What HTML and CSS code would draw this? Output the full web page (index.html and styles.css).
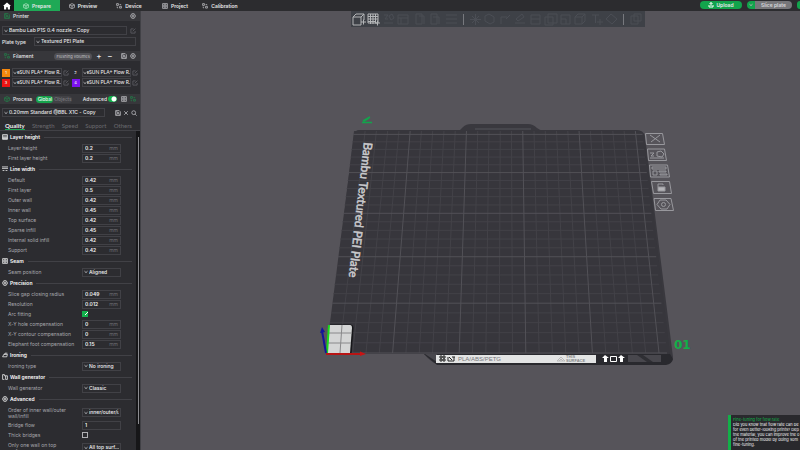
FILE: index.html
```html
<!DOCTYPE html>
<html lang="en">
<head>
<meta charset="utf-8">
<title>Slicer - Prepare</title>
<link rel="stylesheet" href="styles.css">
</head>
<body>
<svg class="defs" aria-hidden="true">
  <symbol id="chev" viewBox="0 0 4 4"><path d="M.5 1.2 2 2.6 3.5 1.2"/></symbol>
  <symbol id="gear" viewBox="0 0 10 10"><path d="M3 1.2h4L9.2 5 7 8.800H3L.8 5z"/><circle cx="5" cy="5" r="1.700"/></symbol>
  <symbol id="edit" viewBox="0 0 10 10"><path d="M6 1.500H1.500v7h7V5M4.500 5.500 9 1"/></symbol>
  <symbol id="cube" viewBox="0 0 10 10"><path d="M5 1 9 3v4.500L5 9.300 1 7.500V3zM1 3l4 2 4-2M5 5v4"/></symbol>
  <symbol id="nodes" viewBox="0 0 10 10"><path d="M1 1h3v3H1zM6 5.500h3v3H6zM6 2.500h2v1M3.500 8H2V6"/></symbol>
  <symbol id="layers" viewBox="0 0 10 10"><path d="M1 1h8v8H1zM1 3.500h8M1 6h8M1 7.500h8"/></symbol>
  <symbol id="lines" viewBox="0 0 10 10"><path d="M0 1.500h10M0 4h10M1 7.500h3M6 7.500h3"/></symbol>
  <symbol id="box" viewBox="0 0 10 10"><path d="M1 1h8v8H1zM3 3h4v4H3zM5 3v4"/></symbol>
  <symbol id="iron" viewBox="0 0 10 10"><path d="M1 8 3 4h6L8 8zM4 4l1-2h4"/></symbol>
  <symbol id="wall" viewBox="0 0 10 10"><path d="M4 1H1v8h3M6 9h3V3H6zM4 1v2h2"/></symbol>
  <symbol id="save" viewBox="0 0 10 10"><path d="M1 1h6l2 2v6H1zM3 1v3h4M3 9V6h4v3"/></symbol>
  <symbol id="close" viewBox="0 0 10 10"><path d="M2 2l6 6M8 2 2 8"/></symbol>
  <symbol id="search" viewBox="0 0 10 10"><circle cx="4.500" cy="4.500" r="3.200"/><path d="M7 7l2.500 2.500"/></symbol>
</svg>

<header class="topbar">
  <button class="home" aria-label="Home"><svg viewBox="0 0 10 10"><path d="M5 .5 0 5h1.300v4.500H4V6.500h2v3h2.700V5H10z"/></svg></button>
  <nav class="nav">
    <a class="nav-item current" href="#"><svg class="ico"><use href="#cube"/></svg>Prepare</a>
    <a class="nav-item" href="#"><svg class="ico"><use href="#cube"/></svg>Preview</a>
    <a class="nav-item" href="#"><svg class="ico"><use href="#nodes"/></svg>Device</a>
    <a class="nav-item" href="#"><svg class="ico"><use href="#box"/></svg>Project</a>
    <a class="nav-item" href="#"><svg class="ico"><use href="#nodes"/></svg>Calibration</a>
  </nav>
  <div class="actions">
    <button class="upload"><svg class="ico"><path d="M1 3v2h4V3M3 4V.5M1.500 2 3 .5 4.500 2" /></svg>Upload</button>
    <div class="split"><button class="drop" aria-label="Slice options"><svg class="chev"><use href="#chev"/></svg></button><button class="slice">Slice plate</button></div>
    <button class="cut" aria-label="Print options"></button>
  </div>
</header>

<div class="app">
<aside class="sidebar">
  <div class="panel">
    <h2 class="bar"><svg class="ico green"><use href="#save"/></svg>Printer<svg class="ico end"><use href="#gear"/></svg></h2>
    <div class="printer">
      <div class="line"><span class="pick grow"><svg class="chev"><use href="#chev"/></svg><select aria-label="Printer"><option>Bambu Lab P1S 0.4 nozzle - Copy</option></select></span><svg class="ico dim"><use href="#edit"/></svg></div>
      <div class="line plate"><label for="plate">Plate type</label><span class="pick grow"><svg class="chev"><use href="#chev"/></svg><select id="plate"><option>Textured PEI Plate</option></select></span></div>
    </div>
    <h2 class="bar"><svg class="ico green"><use href="#nodes"/></svg>Filament<button class="flush">Flushing volumes</button><button class="sign" aria-label="Add">+</button><button class="sign" aria-label="Remove">−</button><svg class="ico end"><use href="#save"/></svg><svg class="ico"><use href="#gear"/></svg></h2>
    <div class="filaments">
      <div class="filament"><button class="swatch orange">1</button><span class="pick grow"><svg class="chev"><use href="#chev"/></svg><select aria-label="Filament 1"><option>eSUN PLA+ Flow R...</option></select></span><svg class="ico dim"><use href="#edit"/></svg></div>
      <div class="filament"><button class="swatch">2</button><span class="pick grow"><svg class="chev"><use href="#chev"/></svg><select aria-label="Filament 2"><option>eSUN PLA+ Flow R...</option></select></span><svg class="ico dim"><use href="#edit"/></svg></div>
      <div class="filament"><button class="swatch red">3</button><span class="pick grow"><svg class="chev"><use href="#chev"/></svg><select aria-label="Filament 3"><option>eSUN PLA+ Flow R...</option></select></span><svg class="ico dim"><use href="#edit"/></svg></div>
      <div class="filament"><button class="swatch violet">4</button><span class="pick grow"><svg class="chev"><use href="#chev"/></svg><select aria-label="Filament 4"><option>eSUN PLA+ Flow R...</option></select></span><svg class="ico dim"><use href="#edit"/></svg></div>
    </div>
    <div class="bar process"><svg class="ico green"><use href="#cube"/></svg><h2>Process</h2><div class="scope"><button class="on">Global</button><button>Objects</button></div><label class="adv end">Advanced<input class="switch" type="checkbox" checked></label><svg class="ico"><use href="#box"/></svg><svg class="ico green"><use href="#nodes"/></svg></div>
    <div class="line preset"><span class="pick"><svg class="chev"><use href="#chev"/></svg><select aria-label="Process preset"><option>0.20mm Standard @BBL X1C - Copy</option></select></span><svg class="ico end"><use href="#save"/></svg><svg class="ico"><use href="#close"/></svg><svg class="ico"><use href="#search"/></svg></div>
    <nav class="tabs"><a class="tab current" href="#">Quality</a><a class="tab" href="#">Strength</a><a class="tab" href="#">Speed</a><a class="tab" href="#">Support</a><a class="tab" href="#">Others</a></nav>
  </div>

  <div class="scroller">
  <form class="settings">
    <h3><svg class="ico"><use href="#layers"/></svg>Layer height</h3>
    <div class="row"><label for="a1">Layer height</label><span class="field"><input id="a1" value="0.2">mm</span></div>
    <div class="row"><label for="a2">First layer height</label><span class="field"><input id="a2" value="0.2">mm</span></div>
    <h3><svg class="ico"><use href="#lines"/></svg>Line width</h3>
    <div class="row"><label for="b1">Default</label><span class="field"><input id="b1" value="0.42">mm</span></div>
    <div class="row"><label for="b2">First layer</label><span class="field"><input id="b2" value="0.5">mm</span></div>
    <div class="row"><label for="b3">Outer wall</label><span class="field"><input id="b3" value="0.42">mm</span></div>
    <div class="row"><label for="b4">Inner wall</label><span class="field"><input id="b4" value="0.45">mm</span></div>
    <div class="row"><label for="b5">Top surface</label><span class="field"><input id="b5" value="0.42">mm</span></div>
    <div class="row"><label for="b6">Sparse infill</label><span class="field"><input id="b6" value="0.45">mm</span></div>
    <div class="row"><label for="b7">Internal solid infill</label><span class="field"><input id="b7" value="0.42">mm</span></div>
    <div class="row"><label for="b8">Support</label><span class="field"><input id="b8" value="0.42">mm</span></div>
    <h3><svg class="ico"><use href="#box"/></svg>Seam</h3>
    <div class="row"><label for="c1">Seam position</label><span class="pick"><svg class="chev"><use href="#chev"/></svg><select id="c1"><option>Aligned</option></select></span></div>
    <h3><svg class="ico"><use href="#gear"/></svg>Precision</h3>
    <div class="row"><label for="d1">Slice gap closing radius</label><span class="field"><input id="d1" value="0.049">mm</span></div>
    <div class="row"><label for="d2">Resolution</label><span class="field"><input id="d2" value="0.012">mm</span></div>
    <div class="row"><label for="d3">Arc fitting</label><input class="tick" id="d3" type="checkbox" checked></div>
    <div class="row"><label for="d4">X-Y hole compensation</label><span class="field"><input id="d4" value="0">mm</span></div>
    <div class="row"><label for="d5">X-Y contour compensation</label><span class="field"><input id="d5" value="0">mm</span></div>
    <div class="row"><label for="d6">Elephant foot compensation</label><span class="field"><input id="d6" value="0.15">mm</span></div>
    <h3><svg class="ico"><use href="#iron"/></svg>Ironing</h3>
    <div class="row"><label for="e1">Ironing type</label><span class="pick"><svg class="chev"><use href="#chev"/></svg><select id="e1"><option>No ironing</option></select></span></div>
    <h3><svg class="ico"><use href="#wall"/></svg>Wall generator</h3>
    <div class="row"><label for="f1">Wall generator</label><span class="pick"><svg class="chev"><use href="#chev"/></svg><select id="f1"><option>Classic</option></select></span></div>
    <h3><svg class="ico"><use href="#gear"/></svg>Advanced</h3>
    <div class="row tall"><label for="g1">Order of inner wall/outer wall/infill</label><span class="pick"><svg class="chev"><use href="#chev"/></svg><select id="g1"><option>inner/outer/i...</option></select></span></div>
    <div class="row"><label for="g2">Bridge flow</label><span class="field"><input id="g2" value="1"></span></div>
    <div class="row"><label for="g3">Thick bridges</label><input class="tick" id="g3" type="checkbox"></div>
    <div class="row tall"><label for="g4">Only one wall on top surfaces</label><span class="pick"><svg class="chev"><use href="#chev"/></svg><select id="g4"><option>All top surf...</option></select></span></div>
  </form>
  <div class="track"><div class="thumb"></div></div>
  </div>
</aside>

<main class="stage">
  <svg class="scene" viewBox="141 11 659 439" preserveAspectRatio="xMinYMin slice">
    <path class="plate-edge" d="M354 131h103q4-1 6-4 3-3 8-3h57q5 0 9 4 4 3 7 3h96q4 1 5 5l28 221q0 6-7 7H437q-5-1-13-10h-96z"/>
    <path class="plate-bed" d="M359 130H637q6 0 7 6L670 354H326L354 135q1-5 5-5z"/>
    <path class="notch" d="M475 129h56"/>
    <path id="minor" class="minor"/>
    <path id="major" class="major"/>
    <path class="plate-foot" d="M424 354H670l3 5q-1 5-7 6H437z"/>
    <path class="foot-light" d="M425 354h12v8zM628 355h33v7h-33z"/>
    <path class="foot-band" d="M637 355h6l10 7h-6z"/>
    <path class="label" d="M436 355H596v8H436z"/>
    <path class="ink" d="M440 356h2v2h-2zM443 356h2v2h-2zM440 359h2v2h-2zM443 359h2v2h-2zM448 357v4h6v-4M449 357l3 3M452 357h3"/>
    <text class="label-text" x="458" y="361">PLA/ABS/PETG</text>
    <path class="label-mark" d="M557 361l4-4 4 4zM559 361l2-2 2 2"/>
    <text class="label-small" x="566" y="358">THIS</text><text class="label-small" x="566" y="362">SURFACE</text>
    <path class="plate-marks" d="M602 358l3-3 4 3h-2v4h-3v-4zM618 358l3-3 4 3h-2v4h-3v-4z"/>
    <path class="mark-box" d="M610.500 356.500h6v5h-6z"/>
    <text class="plate-name" transform="translate(364 142) rotate(96.400)">Bambu Textured PEI Plate</text>
    <path class="plate-sign" d="M363 121 370 117M364 121l5-3M362 122.500h10" />
    <text class="plate-no" x="674" y="349">01</text>
    <path class="object-shadow" d="M330 325h21q2 0 2 3l-2 26H327z"/>
    <path class="object" d="M329 325h21q2 0 2 3l-2 25H327z"/>
    <path class="object-lines" d="M328 333h24M327 343h24M342 325l-2 28"/>
    <path class="axis x" d="M326 354h36"/><path class="tip x" d="M360 351.500l6 2.500-6 2z"/>
    <path class="axis y" d="M327 353l2-28"/>
    <path class="axis z" d="M326 353l-4-22"/><path class="tip z" d="M320 333l2-6 3 5z"/>
    <g class="plate-tools">
      <path d="M645.500 133.500h17l2 11h-18zM650 135l10 7M660 135l-9 7"/>
      <path d="M647.500 149h17l2 11.500h-18zM650 153h4l-3 3h3M650 158h14M657 152l4-1 3 3-2 3-5-1z"/>
      <path d="M649.500 165h18l2 12h-19zM652 167h14v2h-14zM653 171h4v4h-4zM659 171h7v1h-7zM660 174h7v1h-7z"/>
      <path d="M651.500 181.500h18l2 12h-18zM658 187v-3h5v1"/><path class="solid" d="M658 187h7v4h-7z"/>
      <path d="M654 198.500h17l2.500 12h-18zM657 204.500l3-4.500h6l4 4.500-3 4.500h-6z"/><circle cx="663.500" cy="204.500" r="2"/>
    </g>
  </svg>
  <div class="toolbar">
    <svg viewBox="0 0 294 16">
      <g class="lit"><path d="M2 6h8v8H2zM2 6l3-3h8l-3 3M13 3v6M10 11h5M12.500 8.500v5M17 3h10v9H17zM19.500 3v10M22 3v10M24.500 3v9M17 5.500h10M17 8h10M17 10.500h7M24 12h5M26.500 9.500v5"/></g>
      <g class="faint"><path d="M33 12h9M33 4h4l-3 4h3M38 5l3-2 2 4-3 2zM47 4h10v9H47zM47 7h10M50 7v6M65 3h6v10h-6zM68 5h5v8M80 3h6v10h-6zM82 6h6v7M95 4h11M95 8h11M95 12h11M119 8.500h11M124.500 3v11M121 5l7 7M128 5l-7 7M134 5l4-2 5 3v5l-4 2-5-3zM150 13V6h6M155 8l4-4M164 12h10M165 8l6-5 2 3-6 4zM180 4h9v9h-9zM180 8h9M194 6h8v8h-8zM197 3h9v9h-9zM210 4h9v9h-9zM210 8h5v5M224 6h7v7h-7zM224 6l3-3h7l-3 3M234 3v7l-3 3M241 4h7M244.500 4v8M249 8v6M246 11h6M255 8l5-5 6 5-5 5zM280 5h7v8h-7zM283 3h7v7h-7z"/></g>
      <path class="sep" d="M112.500 3v11M272.500 3v11"/>
    </svg>
  </div>
  <div class="tip-card"><strong>Fine-tuning for flow rate</strong><p>Did you know that flow rate can be<br>for even better-looking prints? Dep<br>the material, you can improve the o<br>of the printed model by doing som<br>fine-tuning.</p></div>
</main>
</div>
<script src="grid.js"></script>
</body>
</html>
```
FILE: grid.js
```js
// Projects the 256 mm bed grid, one line every 10 mm, bold every 50 mm.
const y = t => (353 - 0.7777 * t) / (1 + 0.00072 * t);
const x = (mm, py) => {
  const k = (353 - py) / 223;
  return (326 + 28 * k) + mm * (1.332 - 0.207 * k);
};
const paths = { minor: '', major: '' };
for (let t = 0; t <= 250; t += 10) {
  const kind = t % 50 ? 'minor' : 'major';
  paths[kind] += `M${x(0, y(t))} ${y(t)}L${x(256, y(t))} ${y(t)}`;
  if (t) paths[kind] += `M${x(t, 353)} 353L${x(t, 131)} 131`;
}
for (const id in paths) document.getElementById(id).setAttribute('d', paths[id]);
```
FILE: styles.css
```css
* { box-sizing: border-box; }
body { margin: 0; height: 100vh; display: flex; flex-direction: column; overflow: hidden; background: #56545a; color: #e8e8ea; font: 5px/8px Inter, "Open Sans", sans-serif; }
.defs { position: absolute; width: 0; height: 0; }
button, input, select { font: inherit; color: inherit; border: 0; padding: 0; margin: 0; background: none; }
a { color: inherit; text-decoration: none; }
h2, h3, p { margin: 0; font: inherit; }
.ico { width: 6px; height: 6px; flex: none; fill: none; stroke: #c4c4c8; stroke-width: 1.2px; }
.chev { width: 4px; height: 4px; flex: none; fill: none; stroke: #b0b0b4; stroke-width: 1px; }
.green { stroke: #23834a; }
.dim { stroke: #66666b; }
.end { margin-left: auto; }
.grow { flex: 1; }

.topbar { display: flex; height: 11px; flex: none; background: #2c2c2f; font-weight: 600; }
.home { width: 14px; display: flex; align-items: center; justify-content: center; background: #151517; }
.home svg { width: 8px; height: 8px; fill: #fff; }
.nav { display: flex; }
.nav-item { width: 46px; display: flex; align-items: center; justify-content: center; gap: 3px; }
.nav-item.current { background: #1fa956; }
.nav-item.current .ico { stroke: #b6e8c8; }
.nav-item:last-child { width: 44px; }
.actions { margin-left: auto; display: flex; gap: 5px; padding: 1px 0; }
.upload { width: 42px; height: 8px; display: flex; align-items: center; justify-content: center; gap: 2px; background: #12a44c; border-radius: 4px; }
.upload .ico { stroke: #fff; stroke-width: 1px; }
.split { display: flex; width: 45px; height: 8px; border-radius: 4px; overflow: hidden; }
.drop { width: 8px; background: #12a44c; display: flex; align-items: center; justify-content: center; }
.slice { flex: 1; background: #77777a; color: #d8d8da; }
.cut { width: 3px; height: 8px; background: #12a44c; border-radius: 4px 0 0 4px; }

.app { flex: 1; min-height: 0; display: flex; }
.sidebar { width: 141px; flex: none; display: flex; flex-direction: column; background: #2c2c30; border-right: 1px solid #414146; }
.panel { flex: none; font-weight: 500; }
.bar { display: flex; align-items: center; gap: 3px; height: 10px; padding: 0 4px; background: #37373b; }
.printer { padding: 5px 4px 5px 2px; }
.line { display: flex; align-items: center; gap: 3px; }
.plate { margin-top: 2px; gap: 6px; }
.plate label { width: 26px; white-space: nowrap; }
.pick { display: flex; align-items: center; gap: 1px; height: 9px; min-width: 0; padding: 0 1px; border: 1px solid #414146; }
.pick select { appearance: none; flex: 1; min-width: 0; width: 0; height: 7px; line-height: 7px; overflow: hidden; white-space: nowrap; outline: 0; }
.flush { margin: 0 0 0 18px; padding: 0 2px; height: 7px; line-height: 7px; font-size: 4px; white-space: nowrap; background: #515156; color: #b4b4b8; border-radius: 4px; }
.sign { width: 8px; font-size: 8px; line-height: 8px; }
.filaments { display: grid; grid-template-columns: 1fr 1fr; gap: 1px 3px; padding: 7px 2px 7px 2px; }
.filament { display: flex; align-items: center; gap: 1px; height: 9px; }
.filament .pick { margin-left: 1px; padding: 0; gap: 0; }
.filament .pick select { font-family: Lato, "Open Sans", sans-serif; }
.swatch { width: 8px; height: 8px; line-height: 8px; font-size: 4px; }
.orange { background: #f5870d; }
.red { background: #ee1414; }
.violet { background: #7c12f0; }
.scope { display: flex; margin-left: 1px; height: 7px; font-family: Lato, "Open Sans", sans-serif; line-height: 7px; color: #77777c; background: #424246; border-radius: 4px; }
.scope button { padding: 0 1px; }
.scope .on { width: 17px; background: #16a34c; color: #fff; border-radius: 4px; }
.adv { display: flex; align-items: center; gap: 1px; margin-right: 1px; }
.switch { appearance: none; width: 9px; height: 6px; border-radius: 3px; background: radial-gradient(circle at 6px 3px, #fff 2px, #12b04c 3px); }
.preset { padding: 4px 3px 4px 2px; gap: 2px; }
.preset .pick { width: 103px; }
.tabs { display: flex; justify-content: space-between; height: 10px; padding: 0 8px 0 5px; color: #66666b; font-size: 6px; font-family: Lato, "Open Sans", sans-serif; border-bottom: 1px solid #414146; }
.tab { line-height: 9px; }
.tab.current { color: #f0f0f2; font-weight: bold; border-bottom: 1px solid #1fa956; }

.scroller { flex: 1; min-height: 0; display: flex; overflow: hidden; }
.settings { flex: 1; padding-right: 4px; }
.settings h3 { display: flex; align-items: center; gap: 2px; height: 12px; padding-left: 2px; font-weight: 600; color: #fff; }
.settings h3::after { content: ""; flex: 1; margin-left: 2px; height: 1px; background: #414146; }
.settings h3 .ico { stroke: #fff; }
.row { display: grid; grid-template-columns: 66px 39px; gap: 8px; align-items: center; height: 10px; padding-left: 8px; color: #a8a8ad; }
.row label { white-space: nowrap; }
.tall { height: 15px; line-height: 6px; }
.tall label { white-space: normal; }
.field { display: flex; align-items: center; height: 9px; padding: 0 2px; border: 1px solid #414146; color: #6e6e74; }
.field input { flex: 1; width: 0; height: 7px; font-weight: 600; color: #f0f0f2; outline: 0; }
.row .pick, .row select { color: #f0f0f2; }
.row select { font-weight: 500; }
.tick { appearance: none; width: 6px; height: 6px; border: 1px solid #b0b0b4; }
.tick:checked { border: 0; background: linear-gradient(135deg, transparent 40%, #fff 40% 55%, transparent 55%) 3px 1px / 3px 3px no-repeat #13b04c; }
.track { width: 4px; background: #161618; }
.thumb { width: 1px; height: 90%; margin: 6px auto 0; background: #8c8c90; }

.stage { flex: 1; min-width: 0; position: relative; overflow: hidden; }
.scene { width: 100%; height: 100%; display: block; }
.plate-edge { fill: #39383e; }
.plate-bed { fill: #37363c; }
.notch { stroke: #55545b; fill: none; }
.minor, .major { fill: none; stroke: #434248; stroke-width: 1; }
.major { stroke: #525157; }
.plate-foot { fill: #29292e; }
.foot-light { fill: #48474d; }
.foot-band { fill: #2f2f34; }
.label { fill: #e3e4e4; }
.ink { fill: none; stroke: #222; }
.label-text { font: 6px "Liberation Sans", sans-serif; fill: #77777a; }
.label-small { font: bold 4px "Liberation Sans", sans-serif; fill: #88888b; }
.label-mark { fill: none; stroke: #bbb; }
.plate-marks { fill: #fff; }
.mark-box { fill: none; stroke: #fff; stroke-width: 1; }
.plate-name { font: 12px Lato, "Liberation Sans", sans-serif; fill: #c9c9cc; stroke: #c9c9cc; stroke-width: .5; }
.plate-sign { fill: none; stroke: #12a44c; stroke-width: 1.500; }
.plate-no { font: bold 12px "DejaVu Sans", sans-serif; fill: #12b048; }
.object-shadow { fill: #17171a; stroke: #17171a; stroke-width: 1; }
.object { fill: #d4d5d5; }
.object-lines { fill: none; stroke: #88888a; }
.axis { fill: none; stroke-width: 2; }
.axis.x { stroke: #b81414; }
.axis.y { stroke: #18d81c; }
.axis.z { stroke: #14149a; }
.tip.x { fill: #c81414; }
.tip.z { fill: #14149a; }
.plate-tools { fill: none; stroke: #98989d; stroke-width: 1; }
.plate-tools .solid { fill: #b4b4b8; }
.toolbar { position: absolute; top: 0; left: 210px; width: 294px; height: 16px; background: #3e4147; }
.toolbar svg { display: block; width: 294px; height: 16px; fill: none; }
.lit { stroke: #b4b6b8; }
.faint { stroke: #4b4e55; }
.sep { stroke: #77797e; }
.tip-card { position: absolute; bottom: 0; right: 0; width: 72px; height: 35px; padding: 2px 0 0 2px; border-left: 3px solid #12b048; background: #29292d; color: #f4f4f6; font-size: 4px; line-height: 5px; white-space: nowrap; }
.tip-card strong { display: block; color: #15a045; font-weight: 500; }
```
